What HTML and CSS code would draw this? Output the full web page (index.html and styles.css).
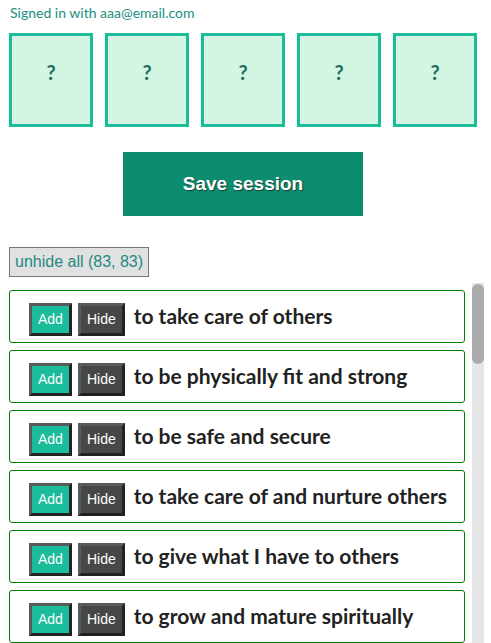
FILE: index.html
```html
<!DOCTYPE html>
<html>
<head>
<meta charset="utf-8">
<link rel="stylesheet" href="styles.css">
</head>
<body>
<div class="page">
  <p class="signed">Signed in with aaa@email.com</p>
  <div class="slots">
    <div class="slot">?</div>
    <div class="slot">?</div>
    <div class="slot">?</div>
    <div class="slot">?</div>
    <div class="slot">?</div>
  </div>
  <button class="save">Save session</button>
  <button class="unhide">unhide all (83, 83)</button>
  <div class="list">
    <div class="items">
      <div class="item"><button class="btn add">Add</button><button class="btn hide">Hide</button><span class="label">to take care of others</span></div>
      <div class="item"><button class="btn add">Add</button><button class="btn hide">Hide</button><span class="label">to be physically fit and strong</span></div>
      <div class="item"><button class="btn add">Add</button><button class="btn hide">Hide</button><span class="label">to be safe and secure</span></div>
      <div class="item"><button class="btn add">Add</button><button class="btn hide">Hide</button><span class="label">to take care of and nurture others</span></div>
      <div class="item"><button class="btn add">Add</button><button class="btn hide">Hide</button><span class="label">to give what I have to others</span></div>
      <div class="item"><button class="btn add">Add</button><button class="btn hide">Hide</button><span class="label">to grow and mature spiritually</span></div>
    </div>
    <div class="scrollbar" aria-hidden="true"><div class="thumb"></div></div>
  </div>
</div>
</body>
</html>
```
FILE: styles.css
```css
html, body {
  margin: 0;
  padding: 0;
  height: 100%;
  overflow: hidden;
  background: #fff;
}
body {
  font-family: Lato, "Noto Sans", sans-serif;
}
.page {
  display: flex;
  flex-direction: column;
  align-items: flex-start;
  height: 100vh;
}
.signed {
  margin: 5px 0 0 10px;
  font-size: 14px;
  line-height: 16px;
  color: #1a8f80;
}
.slots {
  display: flex;
  gap: 12px;
  margin: 12px 0 0 9px;
}
.slot {
  box-sizing: border-box;
  width: 84px;
  height: 94px;
  border: 3px solid #1abc9c;
  background: #d5f5e3;
  padding-top: 24px;
  text-align: center;
  font-weight: 700;
  font-size: 20px;
  line-height: 24px;
  color: #1b6a5f;
}
.save {
  margin: 25px 0 0 123px;
  width: 240px;
  height: 64px;
  border: none;
  background: #0e8c6f;
  color: #fff;
  font-family: "Liberation Sans", Arial, sans-serif;
  font-weight: 700;
  font-size: 19px;
  text-shadow: 1px 1px 1px #1d3d35;
  padding: 0;
}
.unhide {
  margin: 31px 0 0 9px;
  height: 30px;
  box-sizing: border-box;
  border: 1px solid #767676;
  background: #e1e1e1;
  color: #1f8a80;
  font-family: "Liberation Sans", Arial, sans-serif;
  font-size: 16px;
  padding: 0 5px;
}
.list {
  margin: 6px 0 0 8px;
  width: 476px;
  flex: 1;
  min-height: 0;
  display: flex;
  align-items: stretch;
  overflow: hidden;
}
.items {
  width: 456px;
  margin-left: 1px;
  padding-top: 7px;
  display: flex;
  flex-direction: column;
  gap: 7px;
}
.scrollbar {
  width: 12px;
  margin-left: 7px;
  background: #e6e6e6;
  padding-top: 1px;
}
.thumb {
  height: 80px;
  border-radius: 6px;
  background: #ababab;
}
.item {
  box-sizing: border-box;
  height: 53px;
  flex: none;
  border: 1px solid #008000;
  border-radius: 3px;
  display: flex;
  align-items: baseline;
  padding: 12px 0 0 19px;
}
.btn {
  height: 33px;
  box-sizing: border-box;
  border-width: 3px;
  border-style: solid;
  border-color: #5a5a5a #222 #222 #5a5a5a;
  font-family: "Liberation Sans", Arial, sans-serif;
  font-size: 14px;
  line-height: 27px;
  color: #fff;
  padding: 0 6px;
}
.add {
  background: #1abc9c;
  margin-right: 6px;
}
.hide {
  background: #474747;
  margin-right: 9px;
}
.label {
  font-weight: 700;
  font-size: 21px;
  color: #222;
  white-space: nowrap;
}
```
